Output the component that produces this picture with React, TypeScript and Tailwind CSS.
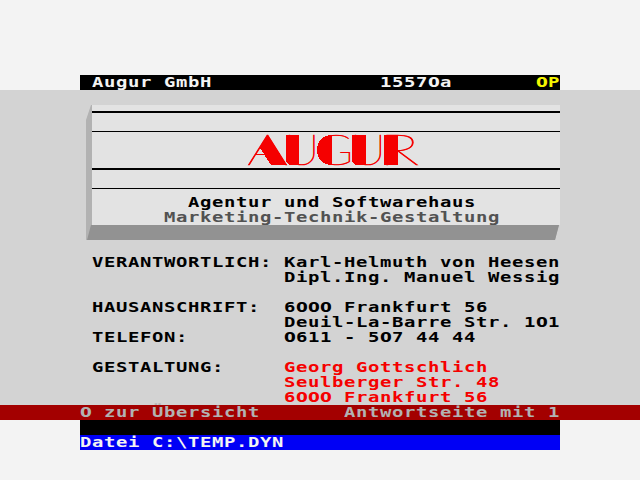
import React from "react";

const CELL = 12;

function Mono({ children, className = "" }: { children: string; className?: string }) {
  return (
    <span className={`block h-[15px] shrink-0 ${className}`} style={{ width: children.length * CELL }}>
      <span className="inline-block origin-left scale-x-[1.35] whitespace-pre align-top font-['DejaVu_Sans_Mono','Liberation_Mono',monospace] text-[14px] leading-[15px] font-bold tracking-[0.46px]">
        {children.split(/(0+)/).map((run, i) =>
          run.startsWith("0") ? (
            <span key={i} className="font-['DejaVu_Sans_Condensed','DejaVu_Sans',sans-serif] tracking-[0.12px] font-stretch-condensed">
              {run}
            </span>
          ) : (
            run
          ),
        )}
      </span>
    </span>
  );
}

function Entry({ label = "", value = "", accent = false }: { label?: string; value?: string; accent?: boolean }) {
  return (
    <div className="flex h-[15px]">
      <div className="w-[192px] shrink-0">{label && <Mono>{label}</Mono>}</div>
      {value && <Mono className={accent ? "text-[#f50000]" : ""}>{value}</Mono>}
    </div>
  );
}

/* Thin lettering with solid accents on the heavy side of each letter. */
const letters = [
  { char: "A", x: 247, width: 41 },
  { char: "U", x: 284, width: 35.5 },
  { char: "G", x: 315, width: 38.5 },
  { char: "U", x: 350, width: 36 },
  { char: "R", x: 379, width: 40 },
];

function Logo() {
  return (
    <svg className="ml-[148px] block h-[36px] w-[184px] overflow-visible" viewBox="240 132 184 36" fill="#f50000">
      {letters.map((l, i) => (
        <text key={i} x={l.x} y="165" fontSize="41.5" textLength={l.width} lengthAdjust="spacingAndGlyphs" stroke="#f50000" strokeWidth="0.6" className="font-['Lato',sans-serif] font-thin">
          {l.char}
        </text>
      ))}
      <g shapeRendering="crispEdges">
        <polygon points="267.5,135 287,165 271,165 260,148" />
        <path d="M286 135h13v30h-6q-7 0-7-5z" />
        <path d="M332 135v30q-15-1-15-15t15-15z" />
        <path d="M352 135h14v30h-7q-7 0-7-5z" />
        <rect x="384" y="135" width="14" height="30" />
      </g>
    </svg>
  );
}

export default function App() {
  return (
    <main className="flex h-[480px] w-[640px] flex-col overflow-hidden bg-[#f3f3f3] pt-[75px] text-black">
      <header className="mx-[80px] flex h-[15px] shrink-0 bg-black pl-[12px] text-[#f3f3f3]">
        <Mono>Augur GmbH</Mono>
        <Mono className="ml-[168px]">15570a</Mono>
        <Mono className="ml-auto text-[#f5f500]">0P</Mono>
      </header>
      <section className="h-[315px] shrink-0 bg-[#d3d3d3] pt-[15px] pl-[86px]">
        <div className="flex h-[120px]">
          <div className="w-[6px] bg-[#b2b2b2] [clip-path:polygon(100%_0,100%_100%,0_100%,0_15px,5px_0)]" />
          <div className="w-[468px] bg-[#e3e3e3] pt-[6px]">
            <div className="h-[2px] bg-black" />
            <div className="mt-[18px] h-px bg-black" />
            <Logo />
            <div className="h-[2px] bg-black" />
            <div className="mt-[18px] h-px bg-black" />
            <Mono className="mt-[6px] ml-[96px]">Agentur und Softwarehaus</Mono>
            <Mono className="ml-[72px] text-[#525252]">Marketing-Technik-Gestaltung</Mono>
          </div>
        </div>
        <div className="flex h-[15px] w-[474px] bg-[#b2b2b2] [clip-path:polygon(0_0,473px_0,469px_100%,0_100%)]">
          <div className="w-full bg-[#929292] [clip-path:polygon(5px_0,100%_0,100%_100%,1px_100%)]" />
        </div>
        <div className="mt-[15px] ml-[6px]">
          <Entry label="VERANTWORTLICH:" value="Karl-Helmuth von Heesen" />
          <Entry value="Dipl.Ing. Manuel Wessig" />
          <Entry />
          <Entry label="HAUSANSCHRIFT:" value="6000 Frankfurt 56" />
          <Entry value="Deuil-La-Barre Str. 101" />
          <Entry label="TELEFON:" value="0611 - 507 44 44" />
          <Entry />
          <Entry label="GESTALTUNG:" value="Georg Gottschlich" accent />
          <Entry value="Seulberger Str. 48" accent />
          <Entry value="6000 Frankfurt 56" accent />
        </div>
      </section>
      <div className="flex h-[15px] shrink-0 justify-between bg-[#a30000] px-[80px] text-[#b2b2b2]">
        <Mono>0 zur Übersicht</Mono>
        <Mono>Antwortseite mit 1</Mono>
      </div>
      <div className="mx-[80px] h-[15px] shrink-0 bg-black" />
      <footer className="mx-[80px] h-[15px] shrink-0 bg-[#0000f5] text-[#f3f3f3]">
        <Mono>Datei C:\TEMP.DYN</Mono>
      </footer>
    </main>
  );
}
